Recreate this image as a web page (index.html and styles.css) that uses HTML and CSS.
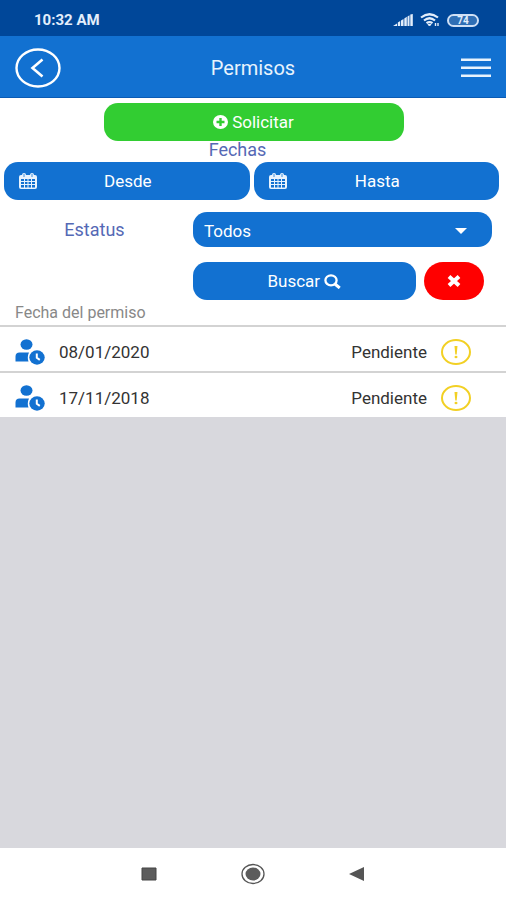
FILE: index.html
```html
<!DOCTYPE html>
<html lang="es">
<head>
<meta charset="utf-8">
<meta name="viewport" content="width=device-width, initial-scale=1">
<title>Permisos</title>
<link rel="stylesheet" href="styles.css">
</head>
<body>
<svg class="defs" aria-hidden="true">
  <symbol id="calendar" viewBox="0 0 18 16">
    <rect x="0" y="2" width="18" height="14" rx="2"/>
    <rect x="3" y="0" width="4" height="5" rx="2"/>
    <rect x="11" y="0" width="4" height="5" rx="2"/>
    <path d="M2 6h3v2h-3zM6 6h2.500v2h-2.500zM9.500 6h2.500v2h-2.500zM13 6h3v2h-3zM2 9h3v2h-3zM6 9h2.500v2h-2.500zM9.500 9h2.500v2h-2.500zM13 9h3v2h-3zM2 12h3v2.500h-3zM6 12h2.500v2.500h-2.500zM9.500 12h2.500v2.500h-2.500zM13 12h3v2.500h-3z" fill="#1271d1"/>
    <path d="M5 1v3M13 1v3" stroke="#1271d1" stroke-width=".8"/>
  </symbol>
  <symbol id="user-clock" viewBox="0 0 30 26">
    <ellipse cx="11.500" cy="5.500" rx="6" ry="5.200"/>
    <path d="M0.500 22.500V17.500c0-2.500 1.500-4 4-4h9.500c-1.500 3-1.500 6.500-.5 9z"/>
    <ellipse cx="22" cy="18.500" rx="8.700" ry="8" fill="#fff"/>
    <ellipse cx="22" cy="18.500" rx="7.700" ry="7.200"/>
    <path d="M21.800 14.500v4.300l3 2" fill="none" stroke="#fff" stroke-width="2"/>
  </symbol>
  <symbol id="pending" viewBox="0 0 30 26">
    <ellipse cx="15" cy="13" rx="14" ry="12" fill="none" stroke="#f2d024" stroke-width="2"/>
    <path d="M13.500 7h3l-.8 8.500h-1.400z"/>
    <ellipse cx="15" cy="18" rx="1.500" ry="1.200"/>
  </symbol>
</svg>
<header>
  <div class="status">
    <span>10:32 AM</span>
    <div class="indicators">
      <svg width="20" height="12" viewBox="0 0 20 12" fill="#e3eefb"><path d="M0 12l4-2.500v2.500zM4.800 12v-3.500l2.400-1.500v5zM8 12v-5.500l2.500-1.500v7zM11.300 12v-7.500l2.500-1.700v9.200zM14.500 12v-9.500l2-1.300v10.800zM17.300 12v-11.500l2.500-.5v12z"/></svg>
      <svg width="20" height="14" viewBox="0 0 20 14" fill="none" stroke="#e3eefb" stroke-width="2.200"><path d="M1 4.500q8.500-6.500 17 0M4 7.500q5.500-4.500 11 0M6.500 10.200q3-2.200 6 0"/><path d="M8 11.500h3l-1.500 1.500z" fill="#e3eefb" stroke-width="1"/><path d="M15.500 10v3M18 10v3" stroke-width="1.400"/></svg>
      <span class="battery">74</span>
    </div>
  </div>
  <nav class="appbar">
    <button class="plain" aria-label="Volver"><svg width="46" height="40" viewBox="0 0 46 40" fill="none" stroke="#fff"><ellipse cx="23" cy="20" rx="21.500" ry="18.500" stroke-width="2.400"/><path d="M27.500 11.500L17.500 20l10 8.500" stroke-width="2.600"/></svg></button>
    <h1>Permisos</h1>
    <button class="plain menu" aria-label="Menú"><svg width="30" height="20" viewBox="0 0 30 20" fill="#e8f3fd"><path d="M0 .5h30v2.500h-30zM0 8.500h30v2.500h-30zM0 16.500h30v2.500h-30z"/></svg></button>
  </nav>
</header>
<main>
  <form class="filters">
    <button type="button" class="pill request"><svg width="15" height="14" viewBox="0 0 15 14"><ellipse cx="7.500" cy="7" rx="7.500" ry="7" fill="#fff"/><path d="M7.500 3v8M3.500 7h8" stroke="#32cd32" stroke-width="2.400"/></svg>Solicitar</button>
    <h2>Fechas</h2>
    <div class="dates">
      <button type="button" class="pill date"><svg width="18" height="16" fill="#e8f3fd"><use href="#calendar"/></svg><span>Desde</span></button>
      <button type="button" class="pill date"><svg width="18" height="16" fill="#e8f3fd"><use href="#calendar"/></svg><span>Hasta</span></button>
    </div>
    <div class="row state">
      <label for="estatus">Estatus</label>
      <div class="select"><select id="estatus" class="pill"><option>Todos</option></select><svg class="caret" width="12" height="6" viewBox="0 0 12 6" fill="#fff"><path d="M0 0h12l-6 6z"/></svg></div>
    </div>
    <div class="row actions">
      <button type="button" class="pill search">Buscar<svg width="17" height="15" viewBox="0 0 17 15" fill="none" stroke="#fff"><ellipse cx="7" cy="6.300" rx="5.600" ry="5" stroke-width="2.300"/><path d="M11 10l4.700 4" stroke-width="3"/></svg></button>
      <button type="button" class="pill clear" aria-label="Limpiar"><svg width="14" height="12" viewBox="0 0 14 12" stroke="#fff" stroke-width="4"><path d="M2 1.500l10 9M12 1.500l-10 9"/></svg></button>
    </div>
  </form>
  <section class="list">
    <h3>Fecha del permiso</h3>
    <ul>
      <li><svg width="30" height="26" fill="#1271d1"><use href="#user-clock"/></svg><time>08/01/2020</time><span>Pendiente</span><svg width="30" height="26" fill="#f2d024"><use href="#pending"/></svg></li>
      <li><svg width="30" height="26" fill="#1271d1"><use href="#user-clock"/></svg><time>17/11/2018</time><span>Pendiente</span><svg width="30" height="26" fill="#f2d024"><use href="#pending"/></svg></li>
    </ul>
  </section>
</main>
<footer>
  <button class="plain" aria-label="Recientes"><svg width="24" height="22" viewBox="0 0 24 22"><path d="M5 5h14v12h-14z" fill="#5c5c5c" stroke="#444"/></svg></button>
  <button class="plain" aria-label="Inicio"><svg width="24" height="22" viewBox="0 0 24 22"><ellipse cx="12" cy="11" rx="11" ry="9.500" fill="none" stroke="#555" stroke-width="1.300"/><ellipse cx="12" cy="11" rx="7.500" ry="6.500" fill="#5c5c5c"/></svg></button>
  <button class="plain" aria-label="Atrás"><svg width="24" height="22" viewBox="0 0 24 22"><path d="M19 4v14l-15-7z" fill="#555"/></svg></button>
</footer>
</body>
</html>
```
FILE: styles.css
```css
* { box-sizing: border-box; }
body {
  margin: 0;
  min-height: 100vh;
  display: flex;
  flex-direction: column;
  background: #d8d8dd;
  font: 17px/20px Roboto, sans-serif;
  color: #333;
}
button, select { font: inherit; color: inherit; border: 0; margin: 0; padding: 0; cursor: pointer; }
h1, h2, h3, ul { margin: 0; padding: 0; font-weight: 400; }
svg { display: block; flex: none; }
.defs { position: absolute; width: 0; height: 0; }
.plain { background: none; }

.status {
  display: flex;
  justify-content: space-between;
  align-items: center;
  height: 36px;
  padding: 4px 27px 0 34px;
  background: #004799;
  color: #e3eefb;
  font-size: 15px;
  font-weight: 700;
}
.indicators { display: flex; align-items: center; gap: 7px; }
.battery {
  width: 32px;
  height: 13px;
  border: 2px solid #cfe0f5;
  border-radius: 7px;
  background: #2f6fb5;
  background-clip: content-box;
  font-size: 10px;
  line-height: 9px;
  text-align: center;
}
.appbar {
  display: grid;
  grid-template-columns: 60px 1fr 60px;
  align-items: center;
  height: 62px;
  padding: 2px 15px 0;
  background: #1271d1;
  border-bottom: 1px solid #0a5bb5;
  color: #e8f3fd;
}
h1 { font-size: 20px; line-height: 24px; text-align: center; }
.menu { justify-self: end; }

main { background: #fff; }
.filters { display: flex; flex-direction: column; padding: 5px 7px 0 4px; }
.pill {
  display: flex;
  align-items: center;
  justify-content: center;
  gap: 4px;
  height: 38px;
  border-radius: 14px;
  background: #1271d1;
  color: #fff;
}
.request { width: 300px; max-width: 100%; align-self: center; margin-left: 4px; background: #32cd32; }
h2, label { color: #5569b5; font-size: 18px; line-height: 18px; text-align: center; }
h2 { padding: 0 28px 3px 0; }
.dates { display: grid; grid-template-columns: 1fr 1fr; gap: 4px; }
.date { padding: 0 15px; }
.date span { flex: 1; padding-right: 20px; }
.row { display: grid; column-gap: 8px; padding-right: 7px; }
.state { grid-template-columns: 181fr 299fr; align-items: center; margin-top: 12px; }
.select { position: relative; }
select.pill {
  width: 100%;
  height: 35px;
  padding: 3px 11px 0;
  appearance: none;
}
.caret { position: absolute; right: 25px; top: 16px; pointer-events: none; }
.actions { grid-template-columns: 181fr 224fr 60px; margin-top: 15px; padding-right: 15px; }
.search { grid-column: 2; }
.clear { background: #f00; border-radius: 20px; }

h3 { padding: 3px 15px 2px; font-size: 16px; line-height: 20px; color: #888; }
ul { list-style: none; }
li {
  display: grid;
  grid-template-columns: 30px 1fr auto 30px;
  align-items: center;
  column-gap: 14px;
  height: 46px;
  padding: 6px 35px 0 15px;
  border-top: 2px solid #d3d3d3;
}

footer {
  display: flex;
  justify-content: center;
  align-items: center;
  gap: 80px;
  height: 52px;
  margin-top: auto;
  background: #fff;
}
```
